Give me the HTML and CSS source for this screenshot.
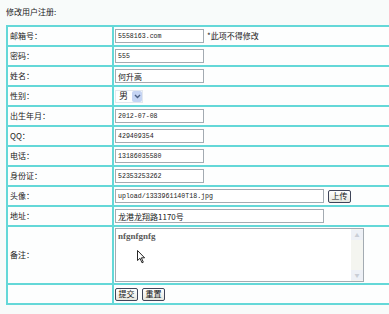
FILE: index.html
```html
<!DOCTYPE html>
<html lang="zh-CN">
<head>
    <meta charset="UTF-8">
    <title>修改用户注册</title>
    <link rel="stylesheet" href="styles.css">
</head>
<body>
    <div class="title">修改用户注册:</div>
    <table class="form">
        <tr>
            <td class="label">邮箱号：</td>
            <td><input class="txt" value="5558163.com" readonly><span class="tip">*此项不得修改</span></td>
        </tr>
        <tr>
            <td class="label">密码：</td>
            <td><input class="txt" value="555"></td>
        </tr>
        <tr>
            <td class="label">姓名：</td>
            <td><input class="txt cjk" value="何升高"></td>
        </tr>
        <tr>
            <td class="label">性别：</td>
            <td><span class="select">男<span class="arrow"><svg width="7" height="5" viewBox="0 0 7 5"><path d="M1 1 L3.5 3.5 L6 1" fill="none" stroke="#4d6185" stroke-width="1.4"/></svg></span></span></td>
        </tr>
        <tr>
            <td class="label">出生年月：</td>
            <td><input class="txt" value="2012-07-08"></td>
        </tr>
        <tr>
            <td class="label">QQ：</td>
            <td><input class="txt" value="429409354"></td>
        </tr>
        <tr>
            <td class="label">电话：</td>
            <td><input class="txt" value="13186035580"></td>
        </tr>
        <tr>
            <td class="label">身份证：</td>
            <td><input class="txt" value="52353253262"></td>
        </tr>
        <tr>
            <td class="label">头像：</td>
            <td><input class="txt wide" value="upload/1333961140T18.jpg"><button class="btn">上传</button></td>
        </tr>
        <tr>
            <td class="label">地址：</td>
            <td><input class="txt wide cjk" value="龙港龙翔路1170号"></td>
        </tr>
        <tr class="memo">
            <td class="label">备注：</td>
            <td>
                <div class="area">
                    <div class="area-text">nfgnfgnfg</div>
                    <div class="scroll">
                        <span class="sb-btn">&#9650;</span>
                        <span class="sb-btn">&#9660;</span>
                    </div>
                    <svg class="cursor" width="9" height="14" viewBox="0 0 9 14"><path d="M0.5 0.5 L0.5 10.5 L3 8.3 L5 12.8 L6.3 12.2 L4.4 7.8 L7.6 7.8 Z" fill="#fff" stroke="#111" stroke-width="0.9"/></svg>
                </div>
            </td>
        </tr>
        <tr>
            <td class="label"></td>
            <td><button class="btn first">提交</button><button class="btn">重置</button></td>
        </tr>
    </table>
</body>
</html>
```

FILE: styles.css
```css
body {
    margin: 0;
    padding: 0 0 0 6px;
    background-color: #f8fbfa;
    font-family: "Noto Sans CJK SC", "DejaVu Sans", sans-serif;
    font-size: 8px;
    color: #1a1a1a;
    overflow: hidden;
}
.title {
    height: 25px;
    line-height: 24px;
}
.form {
    border-collapse: collapse;
    width: 430px;
    border: 2px solid #64d8d8;
    background: #fdfefe;
}
.form td {
    border: 2px solid #64d8d8;
    height: 18px;
    padding: 0 0 0 1px;
    line-height: 12px;
    vertical-align: middle;
}
.form td.label {
    width: 102px;
    padding-left: 2px;
    font-size: 8px;
}
.txt {
    box-sizing: border-box;
    width: 89px;
    height: 14px;
    padding: 0 2px;
    margin: 0;
    border: 1px solid #a3abb2;
    background: #fff;
    font-family: "Liberation Mono", "Noto Sans CJK SC", monospace;
    font-size: 6.6px;
    color: #222;
    vertical-align: middle;
}
.txt.cjk {
    font-family: "Noto Sans CJK SC", sans-serif;
    font-size: 8px;
}
.txt.wide {
    width: 209px;
}
.tip {
    margin-left: 3px;
    vertical-align: middle;
}
.select {
    display: inline-flex;
    align-items: center;
    justify-content: space-between;
    box-sizing: border-box;
    width: 28px;
    height: 13px;
    padding: 0 0 0 3px;
    border: 1px solid #e2e7ee;
    background: #fff;
    font-size: 9px;
    vertical-align: middle;
}
.arrow {
    display: inline-flex;
    align-items: center;
    justify-content: center;
    width: 10px;
    height: 11px;
    background: #c5d4f3;
    border-radius: 2px;
}
.btn {
    box-sizing: border-box;
    width: 23px;
    height: 13px;
    padding: 0;
    margin: 0 0 0 4px;
    border: 1px solid #3f4559;
    border-radius: 2px;
    background: linear-gradient(#ffffff, #e6e6de);
    font-family: "Noto Sans CJK SC", sans-serif;
    font-size: 8px;
    line-height: 10px;
    color: #111;
    vertical-align: middle;
}
.btn.first {
    margin-left: 0;
}
.memo td {
    height: 56px;
}
.area {
    position: relative;
    display: flex;
    box-sizing: border-box;
    width: 249px;
    height: 54px;
    border: 1px solid #a3abb2;
    background: #fff;
}
.area-text {
    flex: 1;
    padding: 2px 2px;
    font-family: "Liberation Serif", serif;
    font-size: 9px;
    font-weight: bold;
    line-height: 10px;
    color: #5a5a5a;
}
.scroll {
    display: flex;
    flex-direction: column;
    justify-content: space-between;
    width: 12px;
    background: #f4f5f0;
    padding: 1px 0;
}
.sb-btn {
    height: 10px;
    font-size: 5px;
    line-height: 10px;
    text-align: center;
    color: #c9cdd5;
    background: #edf0f6;
}
.cursor {
    position: absolute;
    left: 21px;
    top: 21px;
}
```
